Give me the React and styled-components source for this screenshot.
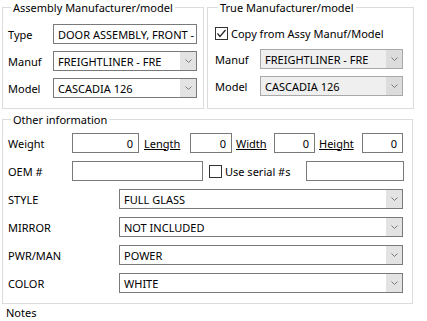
import React from "react";
import styled, { createGlobalStyle } from "styled-components";

const GlobalStyle = createGlobalStyle`
  html, body {
    margin: 0;
    padding: 0;
    background: #ffffff;
  }
  body {
    font-family: "Noto Sans", "Open Sans", sans-serif;
    font-size: 11px;
    color: #000000;
  }
`;

const Page = styled.div`
  width: 427px;
  height: 321px;
  padding-left: 2px;
  box-sizing: border-box;
  overflow: hidden;
`;

const TopRow = styled.div`
  display: flex;
  gap: 3px;
`;

const Group = styled.fieldset`
  box-sizing: border-box;
  width: ${(p) => p.$width}px;
  margin: ${(p) => p.$top || 0}px 0 0 0;
  padding: ${(p) => p.$pt}px ${(p) => p.$pr}px ${(p) => p.$pb}px ${(p) => p.$pl}px;
  border: 1px solid #dcdcdc;
  display: flex;
  flex-direction: column;
  gap: ${(p) => p.$gap || 7}px;
`;

const Legend = styled.legend`
  padding: 0 2px;
  margin-left: 3px;
  line-height: 15px;
  font-size: 11px;
`;

const Row = styled.div`
  display: flex;
  align-items: center;
  height: ${(p) => p.$h || 20}px;
`;

const Label = styled.span`
  width: ${(p) => p.$w}px;
  flex: none;
  padding-left: ${(p) => p.$pl || 0}px;
  box-sizing: border-box;
  white-space: nowrap;
  text-decoration: ${(p) => (p.$link ? "underline" : "none")};
`;

const TextBox = styled.div`
  box-sizing: border-box;
  width: ${(p) => p.$w}px;
  height: 20px;
  flex: none;
  border: 1px solid #7a7a7a;
  background: #ffffff;
  display: flex;
  align-items: center;
  justify-content: ${(p) => (p.$right ? "flex-end" : "flex-start")};
  padding: 0 5px 0 4px;
  white-space: nowrap;
  overflow: hidden;
`;

const ComboBox = styled.div`
  box-sizing: border-box;
  width: ${(p) => p.$w}px;
  height: 20px;
  flex: none;
  border: 1px solid ${(p) => (p.$disabled ? "#a8a8a8" : "#7a7a7a")};
  background: ${(p) => (p.$disabled ? "#efefef" : "#ffffff")};
  display: flex;
`;

const ComboText = styled.div`
  flex: 1;
  display: flex;
  align-items: center;
  padding-left: 4px;
  white-space: nowrap;
  overflow: hidden;
`;

const ComboButton = styled.div`
  width: 16px;
  flex: none;
  background: ${(p) => (p.$disabled ? "#dcdcdc" : "#e3e3e3")};
  display: flex;
  align-items: center;
  justify-content: center;
`;

const CheckBox = styled.span`
  box-sizing: border-box;
  width: 13px;
  height: 13px;
  flex: none;
  border: 1px solid #333333;
  background: #ffffff;
  display: flex;
  align-items: center;
  justify-content: center;
`;

const CheckLabel = styled.label`
  display: flex;
  align-items: center;
  gap: 3px;
  flex: ${(p) => (p.$grow ? 1 : "none")};
  margin-left: ${(p) => p.$ml || 0}px;
  white-space: nowrap;
`;

const Notes = styled.div`
  margin-top: 3px;
  padding-left: 4px;
  line-height: 12px;
`;

const Chevron = () => (
  <svg width="7" height="4" viewBox="0 0 7 4">
    <path d="M0.5 0.5 L3.5 3.5 L6.5 0.5" fill="none" stroke="#7a7a7a" strokeWidth="1" />
  </svg>
);

const Check = () => (
  <svg width="11" height="11" viewBox="0 0 11 11">
    <path d="M1.5 5.5 L4 8.5 L9.5 2" fill="none" stroke="#222222" strokeWidth="1.2" />
  </svg>
);

const Combo = ({ w, value, disabled }) => (
  <ComboBox $w={w} $disabled={disabled}>
    <ComboText>{value}</ComboText>
    <ComboButton $disabled={disabled}>
      <Chevron />
    </ComboButton>
  </ComboBox>
);

const options = [
  ["STYLE", "FULL GLASS"],
  ["MIRROR", "NOT INCLUDED"],
  ["PWR/MAN", "POWER"],
  ["COLOR", "WHITE"],
];

export default function App() {
  return (
    <Page>
      <GlobalStyle />
      <TopRow>
        <Group $width={202} $pt={9} $pr={6} $pb={10} $pl={5}>
          <Legend>Assembly Manufacturer/model</Legend>
          <Row>
            <Label $w={45}>Type</Label>
            <TextBox $w={144}>DOOR ASSEMBLY, FRONT -</TextBox>
          </Row>
          <Row>
            <Label $w={45}>Manuf</Label>
            <Combo w={144} value="FREIGHTLINER - FRE" />
          </Row>
          <Row>
            <Label $w={45}>Model</Label>
            <Combo w={144} value="CASCADIA 126" />
          </Row>
        </Group>
        <Group $width={207} $pt={9} $pr={10} $pb={10} $pl={7}>
          <Legend>True Manufacturer/model</Legend>
          <Row $h={18}>
            <CheckLabel>
              <CheckBox>
                <Check />
              </CheckBox>
              Copy from Assy Manuf/Model
            </CheckLabel>
          </Row>
          <Row>
            <Label $w={45}>Manuf</Label>
            <Combo w={143} value="FREIGHTLINER - FRE" disabled />
          </Row>
          <Row>
            <Label $w={45}>Model</Label>
            <Combo w={143} value="CASCADIA 126" disabled />
          </Row>
        </Group>
      </TopRow>
      <Group $width={411} $top={3} $pt={6} $pr={8} $pb={10} $pl={5} $gap={8}>
        <Legend>Other information</Legend>
        <Row>
          <Label $w={64}>Weight</Label>
          <TextBox $w={67} $right>0</TextBox>
          <Label $w={51} $pl={5} $link>
            Length
          </Label>
          <TextBox $w={42} $right>0</TextBox>
          <Label $w={42} $pl={4} $link>
            Width
          </Label>
          <TextBox $w={41} $right>0</TextBox>
          <Label $w={47} $pl={4} $link>
            Height
          </Label>
          <TextBox $w={41} $right>0</TextBox>
        </Row>
        <Row>
          <Label $w={64}>OEM #</Label>
          <TextBox $w={131} />
          <CheckLabel $grow $ml={6}>
            <CheckBox />
            Use serial #s
          </CheckLabel>
          <TextBox $w={98} />
        </Row>
        {options.map(([label, value]) => (
          <Row key={label}>
            <Label $w={111}>{label}</Label>
            <Combo w={284} value={value} />
          </Row>
        ))}
      </Group>
      <Notes>Notes</Notes>
    </Page>
  );
}
